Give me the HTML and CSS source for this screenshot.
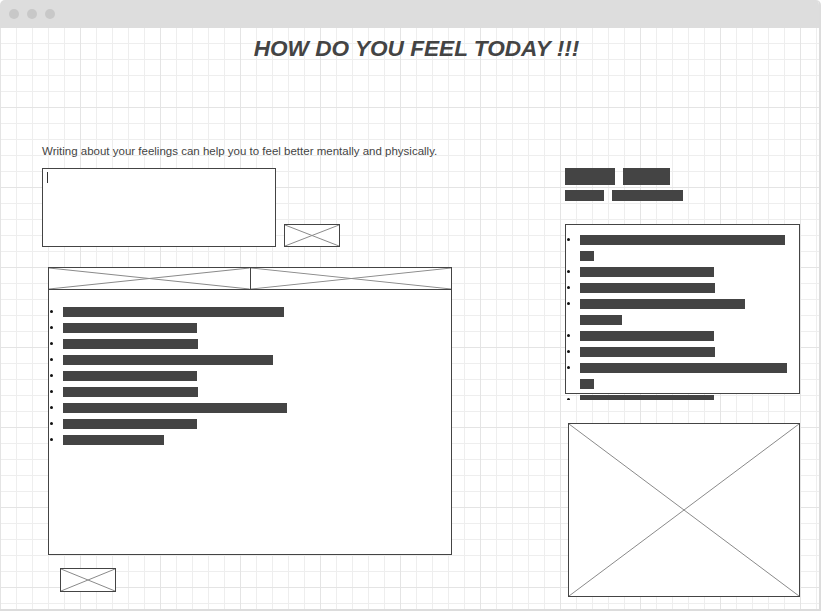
FILE: index.html
```html
<!DOCTYPE html>
<html lang="en">
<head>
<meta charset="utf-8">
<title>How do you feel today</title>
<link rel="stylesheet" href="styles.css">
</head>
<body>
<div class="window">
  <div class="titlebar">
    <span class="dot"></span><span class="dot"></span><span class="dot"></span>
  </div>
  <div class="canvas">
    <h1 class="title">HOW DO YOU FEEL TODAY !!!</h1>
    <div class="content">
      <div class="left">
        <p class="lead">Writing about your feelings can help you to feel better mentally and physically.</p>
        <div class="entry">
          <div class="textarea"><span class="caret"></span></div>
          <div class="ph ph-send"><svg viewBox="0 0 100 100" preserveAspectRatio="none"><line x1="0" y1="0" x2="100" y2="100"/><line x1="0" y1="100" x2="100" y2="0"/></svg></div>
        </div>
        <div class="panel">
          <div class="panel-head">
            <div class="tab"><svg viewBox="0 0 100 100" preserveAspectRatio="none"><line x1="0" y1="0" x2="100" y2="100"/><line x1="0" y1="100" x2="100" y2="0"/></svg></div>
            <div class="tab tab-2"><svg viewBox="0 0 100 100" preserveAspectRatio="none"><line x1="0" y1="0" x2="100" y2="100"/><line x1="0" y1="100" x2="100" y2="0"/></svg></div>
          </div>
          <ul class="bars bars-panel">
            <li><span class="bar" style="width:221px"></span></li>
            <li><span class="bar" style="width:134px"></span></li>
            <li><span class="bar" style="width:135px"></span></li>
            <li><span class="bar" style="width:210px"></span></li>
            <li><span class="bar" style="width:134px"></span></li>
            <li><span class="bar" style="width:135px"></span></li>
            <li><span class="bar" style="width:224px"></span></li>
            <li><span class="bar" style="width:134px"></span></li>
            <li><span class="bar" style="width:101px"></span></li>
          </ul>
        </div>
        <div class="ph ph-foot"><svg viewBox="0 0 100 100" preserveAspectRatio="none"><line x1="0" y1="0" x2="100" y2="100"/><line x1="0" y1="100" x2="100" y2="0"/></svg></div>
      </div>
      <div class="right">
        <div class="chips chips-lg">
          <span class="chip" style="width:50px"></span>
          <span class="chip" style="width:47px"></span>
        </div>
        <div class="chips chips-sm">
          <span class="chip" style="width:39px"></span>
          <span class="chip" style="width:71px"></span>
        </div>
        <div class="clip">
          <div class="box">
            <ul class="bars bars-box">
              <li><span class="bar" style="width:205px"></span><span class="bar" style="width:14px"></span></li>
              <li><span class="bar" style="width:134px"></span></li>
              <li><span class="bar" style="width:135px"></span></li>
              <li><span class="bar" style="width:165px"></span><span class="bar" style="width:42px"></span></li>
              <li><span class="bar" style="width:134px"></span></li>
              <li><span class="bar" style="width:135px"></span></li>
              <li><span class="bar" style="width:207px"></span><span class="bar" style="width:14px"></span></li>
              <li><span class="bar" style="width:134px"></span></li>
            </ul>
          </div>
        </div>
        <div class="ph ph-big"><svg viewBox="0 0 100 100" preserveAspectRatio="none"><line x1="0" y1="0" x2="100" y2="100"/><line x1="0" y1="100" x2="100" y2="0"/></svg></div>
      </div>
    </div>
  </div>
</div>
</body>
</html>
```

FILE: styles.css
```css
* { box-sizing: border-box; }

html, body {
  margin: 0;
  padding: 0;
  background: #ffffff;
}

body {
  font-family: "Liberation Sans", Arial, sans-serif;
  color: #444444;
}

.window {
  width: 821px;
  height: 611px;
  border-right: 2px solid #dcdcdc;
  border-bottom: 2px solid #dcdcdc;
  border-radius: 5px 5px 0 0;
  overflow: hidden;
  display: flex;
  flex-direction: column;
}

.titlebar {
  height: 28px;
  flex: none;
  background: #dddddd;
  display: flex;
  align-items: center;
  gap: 8px;
  padding-left: 9px;
}

.dot {
  width: 10px;
  height: 10px;
  border-radius: 50%;
  background: #c8c8c8;
}

.canvas {
  flex: 1;
  background-color: #ffffff;
  background-image:
    linear-gradient(to right, #e4e4e4 1px, transparent 1px),
    linear-gradient(to bottom, #e4e4e4 1px, transparent 1px),
    linear-gradient(to right, #eeeeee 1px, transparent 1px),
    linear-gradient(to bottom, #eeeeee 1px, transparent 1px);
  background-size: 80px 80px, 80px 80px, 16px 16px, 16px 16px;
  background-position: 0 0, 0 79px, 0 0, 0 15px;
  padding-top: 8px;
}

.title {
  margin: 0;
  font-size: 22.6px;
  line-height: 26px;
  font-weight: bold;
  font-style: italic;
  text-align: center;
  padding-left: 14px;
  color: #444444;
}

.content {
  display: grid;
  grid-template-columns: 410px 235px;
  column-gap: 113px;
  padding-left: 42px;
  margin-top: 83px;
}

.lead {
  margin: 0 0 10px 0;
  font-size: 11.5px;
  line-height: 13px;
  color: #444444;
  white-space: nowrap;
}

.entry {
  display: flex;
  align-items: flex-end;
  gap: 8px;
}

.textarea {
  width: 234px;
  height: 79px;
  border: 1px solid #444444;
  background: #ffffff;
  padding: 3px 0 0 4px;
}

.caret {
  display: block;
  width: 1px;
  height: 11px;
  background: #333333;
}

.ph {
  border: 1px solid #444444;
  background: #ffffff;
}

.ph svg,
.tab svg {
  display: block;
  width: 100%;
  height: 100%;
}

.ph line,
.tab line {
  stroke: #8a8a8a;
  stroke-width: 1;
  vector-effect: non-scaling-stroke;
}

.ph-send {
  width: 56px;
  height: 23px;
}

.panel {
  width: 404px;
  height: 288px;
  margin: 20px 0 0 6px;
  border: 1px solid #444444;
  background: #ffffff;
}

.panel-head {
  display: flex;
  height: 22px;
  border-bottom: 1px solid #444444;
}

.tab {
  flex: 1;
}

.tab-2 {
  border-left: 1px solid #444444;
}

.bars {
  list-style: none;
  margin: 0;
  padding: 0 0 0 14px;
}

.bars li {
  position: relative;
  display: flex;
  flex-direction: column;
  align-items: flex-start;
}

.bars li::before {
  content: "";
  position: absolute;
  left: -13px;
  top: 6px;
  width: 3px;
  height: 3px;
  border-radius: 50%;
  background: #111111;
}

.bar {
  display: block;
  height: 10px;
  margin: 3px 0;
  background: #444444;
}

.bars-panel {
  padding-top: 14px;
}

.ph-foot {
  width: 56px;
  height: 24px;
  margin: 13px 0 0 18px;
}

.right {
  margin-top: 23px;
}

.chips {
  display: flex;
  gap: 8px;
}

.chip {
  display: block;
  background: #444444;
}

.chips-lg .chip {
  height: 17px;
}

.chips-sm {
  margin-top: 5px;
}

.chips-sm .chip {
  height: 11px;
}

.clip {
  margin-top: 23px;
  height: 176px;
  overflow: hidden;
}

.box {
  width: 235px;
  height: 170px;
  border: 1px solid #444444;
  background: #ffffff;
}

.bars-box {
  padding-top: 7px;
}

.ph-big {
  width: 232px;
  height: 174px;
  margin: 23px 0 0 3px;
}
```
